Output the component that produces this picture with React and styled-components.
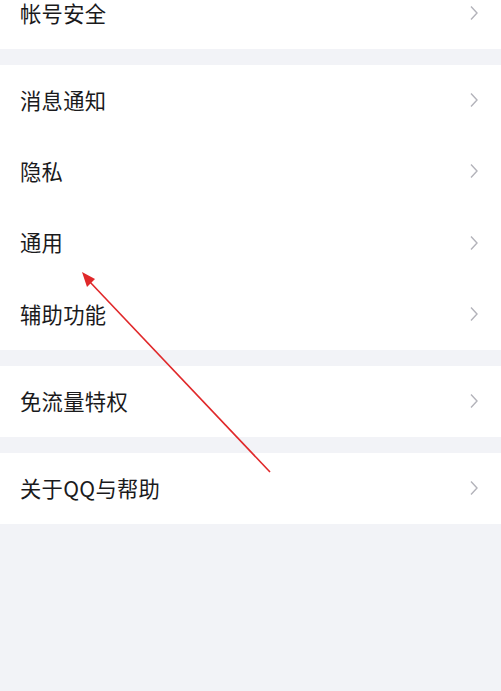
import styled, { createGlobalStyle } from "styled-components";

const GlobalStyle = createGlobalStyle`
  html, body {
    margin: 0;
    padding: 0;
    background: #f2f3f7;
    overflow: hidden;
  }
  body {
    font-family: "Noto Sans CJK SC", "Noto Sans", sans-serif;
  }
`;

const Page = styled.div`
  position: relative;
  width: 501px;
  height: 691px;
  overflow: hidden;
  background: #f2f3f7;
`;

const List = styled.div`
  display: flex;
  flex-direction: column;
  gap: 16px;
  margin-top: -22px;
`;

const Group = styled.div`
  background: #ffffff;
  display: flex;
  flex-direction: column;
`;

const Row = styled.div`
  height: 71.2px;
  display: flex;
  align-items: center;
  justify-content: space-between;
  padding: 0 22px 0 20px;
  box-sizing: border-box;

  > span {
    font-size: 21.3px;
    line-height: 1.2;
    margin-bottom: 2px;
    color: #1a1a1c;
    letter-spacing: 0.3px;
  }

  > svg {
    margin-bottom: 1px;
  }
`;

const Arrow = styled.svg`
  position: absolute;
  left: 0;
  top: 0;
  pointer-events: none;
`;

const Chevron = () => (
  <svg width="10" height="16" viewBox="0 0 10 16">
    <path d="M2 1.5 L8 8 L2 14.5" fill="none" stroke="#b3b3ba" strokeWidth="1.4" />
  </svg>
);

const groups = [
  ["帐号安全"],
  ["消息通知", "隐私", "通用", "辅助功能"],
  ["免流量特权"],
  ["关于QQ与帮助"],
];

const App = () => {
  return (
    <Page>
      <GlobalStyle />
      <List>
        {groups.map((g, i) => (
          <Group key={i}>
            {g.map((label) => (
              <Row key={label}>
                <span>{label}</span>
                <Chevron />
              </Row>
            ))}
          </Group>
        ))}
      </List>
      <Arrow width="501" height="691" viewBox="0 0 501 691">
        <line x1="270" y1="472" x2="89" y2="281" stroke="#e0282a" strokeWidth="1.6" />
        <polygon points="82,272 95,279 87,287" fill="#e0282a" />
      </Arrow>
    </Page>
  );
};

export default App;
